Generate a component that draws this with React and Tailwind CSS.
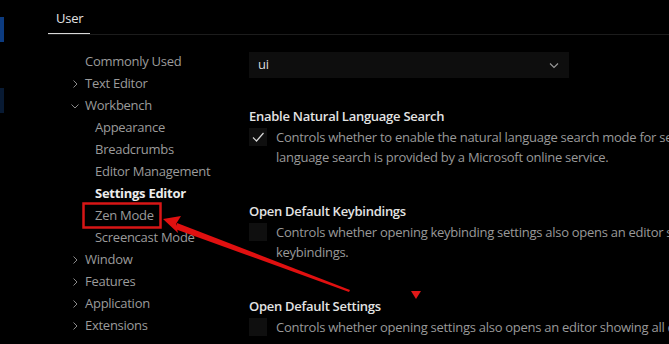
import React from 'react';

const tree = [
    { label: 'Commonly Used', depth: 0 },
    { label: 'Text Editor', depth: 0, chevron: 'right' },
    { label: 'Workbench', depth: 0, chevron: 'down' },
    { label: 'Appearance', depth: 1 },
    { label: 'Breadcrumbs', depth: 1 },
    { label: 'Editor Management', depth: 1 },
    { label: 'Settings Editor', depth: 1, active: true },
    { label: 'Zen Mode', depth: 1 },
    { label: 'Screencast Mode', depth: 1 },
    { label: 'Window', depth: 0, chevron: 'right' },
    { label: 'Features', depth: 0, chevron: 'right' },
    { label: 'Application', depth: 0, chevron: 'right' },
    { label: 'Extensions', depth: 0, chevron: 'right' },
];

const settings = [
    {
        title: 'Enable Natural Language Search',
        checked: true,
        lines: [
            'Controls whether to enable the natural language search mode for settings. The natural',
            'language search is provided by a Microsoft online service.',
        ],
    },
    {
        title: 'Open Default Keybindings',
        lines: [
            'Controls whether opening keybinding settings also opens an editor showing all default',
            'keybindings.',
        ],
    },
    {
        title: 'Open Default Settings',
        lines: ['Controls whether opening settings also opens an editor showing all default settings.'],
    },
];

const Chevron = ({ dir }) => (
    <svg width="10" height="10" viewBox="0 0 10 10" className="text-[#8a8a8a]">
        {dir === 'down' ? (
            <path d="M1.5 3.5 L5 7 L8.5 3.5" fill="none" stroke="currentColor" strokeWidth="1" />
        ) : (
            <path d="M3.5 1.5 L7 5 L3.5 8.5" fill="none" stroke="currentColor" strokeWidth="1" />
        )}
    </svg>
);

export default function App() {
    return (
        <div
            className="relative flex w-[669px] h-[344px] overflow-hidden bg-black text-[13px] tracking-[-0.27px]"
            style={{ fontFamily: '"Segoe UI", "Open Sans", sans-serif' }}
        >
            {/* activity bar edge */}
            <div className="flex flex-col w-[4px] shrink-0">
                <div className="h-[17px]" />
                <div className="h-[25px] bg-[#0c3b80]" />
                <div className="h-[46px]" />
                <div className="h-[25px] bg-[#081a33]" />
            </div>

            <div className="flex flex-col flex-1 pl-[44px]">
                {/* header */}
                <div className="flex h-[35px] border-b border-[#1c1c1c]">
                    <div className="flex flex-col justify-end w-[42px]">
                        <div className="pl-[8px] pb-[6px] text-[#e2e2e2] leading-[18px]">User</div>
                        <div className="h-px bg-[#d8d8d8]" />
                    </div>
                    <div className="ml-auto mt-[2px] h-[25px] w-[11px] bg-[#0f2f6e] text-white text-[13px] leading-[25px] pl-[2px] overflow-hidden">
                        T
                    </div>
                </div>

                <div className="flex flex-1">
                    {/* tree */}
                    <div className="w-[201px] shrink-0 pt-[16px]">
                        {tree.map((item) => (
                            <div key={item.label} className="flex items-center h-[22px]">
                                <div className={item.depth ? 'w-[47px]' : 'w-[37px]'}>
                                    {item.chevron && (
                                        <div className="pl-[22px] flex items-center">
                                            <Chevron dir={item.chevron} />
                                        </div>
                                    )}
                                </div>
                                <span className={item.active ? 'font-bold text-[#ececec]' : 'text-[#9b9b9b]'}>
                                    {item.label}
                                </span>
                            </div>
                        ))}
                    </div>

                    {/* settings content */}
                    <div className="flex-1 pt-[17px] whitespace-nowrap">
                        <div className="flex items-center justify-between w-[320px] h-[26px] bg-[#0e0e0e] pl-[9px] pr-[9px] text-[#dcdcdc]">
                            <span>ui</span>
                            <svg width="12" height="12" viewBox="0 0 12 12">
                                <path d="M2 4.5 L6 8.5 L10 4.5" fill="none" stroke="#9a9a9a" strokeWidth="1.1" />
                            </svg>
                        </div>

                        <div className="flex flex-col gap-[34px] mt-[28px]">
                            {settings.map((s) => (
                                <div key={s.title}>
                                    <div className="font-semibold text-[#e3e3e3] leading-[20px]">{s.title}</div>
                                    <div className="flex mt-[1px]">
                                        <div className="w-[18px] h-[18px] mt-[1px] shrink-0 bg-[#0f0f0f] flex items-center justify-center">
                                            {s.checked && (
                                                <svg width="16" height="16" viewBox="0 0 16 16">
                                                    <path d="M3 8.5 L6.5 12 L13.5 4" fill="none" stroke="#d8d8d8" strokeWidth="1.2" />
                                                </svg>
                                            )}
                                        </div>
                                        <div className="ml-[9px] text-[#999999] leading-[20px]">
                                            {s.lines.map((l) => (
                                                <div key={l}>{l}</div>
                                            ))}
                                        </div>
                                    </div>
                                </div>
                            ))}
                        </div>
                    </div>
                </div>
            </div>

            {/* red annotation overlay */}
            <svg className="absolute inset-0 pointer-events-none" width="669" height="344" viewBox="0 0 669 344">
                <rect x="83.5" y="203.5" width="77" height="24" fill="none" stroke="#d81616" strokeWidth="2.5" />
                <polygon points="163,219 181,216 176,224 178,233" fill="#e01010" />
                <polygon points="177,223 350,290 349,292 175,229" fill="#e01010" />
                <polygon points="411,291 421,291 416,299" fill="#e01818" />
            </svg>
        </div>
    );
}
